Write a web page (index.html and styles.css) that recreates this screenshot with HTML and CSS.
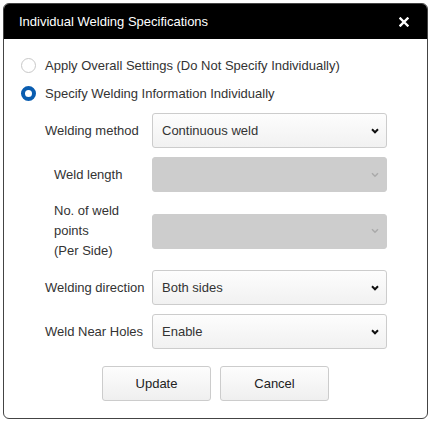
FILE: index.html
```html
<!DOCTYPE html>
<html>
<head>
<meta charset="utf-8">
<link rel="stylesheet" href="styles.css">
</head>
<body>
<div class="dialog">
  <div class="header">
    <span class="title">Individual Welding Specifications</span>
    <svg class="close" width="10" height="10" viewBox="0 0 10 10"><path d="M1.5 1.5 L8.5 8.5 M8.5 1.5 L1.5 8.5" stroke="#fff" stroke-width="2.4" stroke-linecap="square"/></svg>
  </div>
  <div class="body">
    <div class="radio-row"><span class="radio"></span><span>Apply Overall Settings (Do Not Specify Individually)</span></div>
    <div class="radio-row"><span class="radio checked"></span><span>Specify Welding Information Individually</span></div>
    <div class="form">
      <div class="label">Welding method</div>
      <div class="select"><span>Continuous weld</span><svg class="chev" width="8" height="6" viewBox="0 0 8 6"><path d="M1 1.3 L4 4.3 L7 1.3" fill="none" stroke="#111" stroke-width="2"/></svg></div>
      <div class="label sub">Weld length</div>
      <div class="select disabled"><span></span><svg class="chev" width="8" height="6" viewBox="0 0 8 6"><path d="M1 1.3 L4 4.3 L7 1.3" fill="none" stroke="#aaa" stroke-width="1.5"/></svg></div>
      <div class="label sub multi">No. of weld<br>points<br>(Per Side)</div>
      <div class="select disabled"><span></span><svg class="chev" width="8" height="6" viewBox="0 0 8 6"><path d="M1 1.3 L4 4.3 L7 1.3" fill="none" stroke="#aaa" stroke-width="1.5"/></svg></div>
      <div class="label">Welding direction</div>
      <div class="select"><span>Both sides</span><svg class="chev" width="8" height="6" viewBox="0 0 8 6"><path d="M1 1.3 L4 4.3 L7 1.3" fill="none" stroke="#111" stroke-width="2"/></svg></div>
      <div class="label">Weld Near Holes</div>
      <div class="select"><span>Enable</span><svg class="chev" width="8" height="6" viewBox="0 0 8 6"><path d="M1 1.3 L4 4.3 L7 1.3" fill="none" stroke="#111" stroke-width="2"/></svg></div>
    </div>
    <div class="buttons">
      <div class="btn">Update</div>
      <div class="btn">Cancel</div>
    </div>
  </div>
</div>
</body>
</html>
```
FILE: styles.css
```css
* { box-sizing: border-box; }
html, body { margin: 0; padding: 0; background: #fff; }
body {
  font-family: "Liberation Sans", Arial, sans-serif;
  font-size: 13px;
  color: #333;
  padding: 3px 2px 4px 3px;
}
.dialog {
  width: 425px;
  height: 416px;
  border: 1px solid #444;
  border-radius: 6px;
  overflow: hidden;
  display: flex;
  flex-direction: column;
}
.header {
  background: #000;
  height: 35px;
  flex: none;
  display: flex;
  align-items: center;
  justify-content: space-between;
  padding: 0 18px 1px 15px;
  color: #fff;
  font-size: 13px;
}
.close { display: block; margin-top: 1px; }
.body {
  padding: 12px 0 0 17px;
  display: flex;
  flex-direction: column;
}
.radio-row {
  height: 28px;
  display: flex;
  align-items: center;
  gap: 9px;
}
.radio {
  width: 15px;
  height: 15px;
  border: 1px solid #c8c8c8;
  border-radius: 50%;
  background: #fff;
  flex: none;
}
.radio.checked {
  border: 4px solid #0a5db0;
}
.form {
  margin-top: 6px;
  padding-left: 24px;
  display: grid;
  grid-template-columns: 107px 235px;
  row-gap: 9px;
  align-items: center;
}
.label { line-height: 20px; white-space: nowrap; }
.label.sub { padding-left: 9px; }
.select {
  height: 35px;
  border: 1px solid #ccc;
  border-radius: 3px;
  background: linear-gradient(#fdfdfd, #f1f1f1);
  display: flex;
  align-items: center;
  justify-content: space-between;
  padding: 0 7px 0 9px;
  color: #333;
}
.select.disabled {
  background: #cdcdcd;
  border-color: #cdcdcd;
}
.chev { display: block; }
.buttons {
  margin-top: 17px;
  margin-left: -17px;
  display: flex;
  justify-content: center;
  gap: 9px;
}
.btn {
  width: 109px;
  height: 35px;
  border: 1px solid #ccc;
  border-radius: 3px;
  background: linear-gradient(#fdfdfd, #efefef);
  display: flex;
  align-items: center;
  justify-content: center;
  color: #222;
}
```
